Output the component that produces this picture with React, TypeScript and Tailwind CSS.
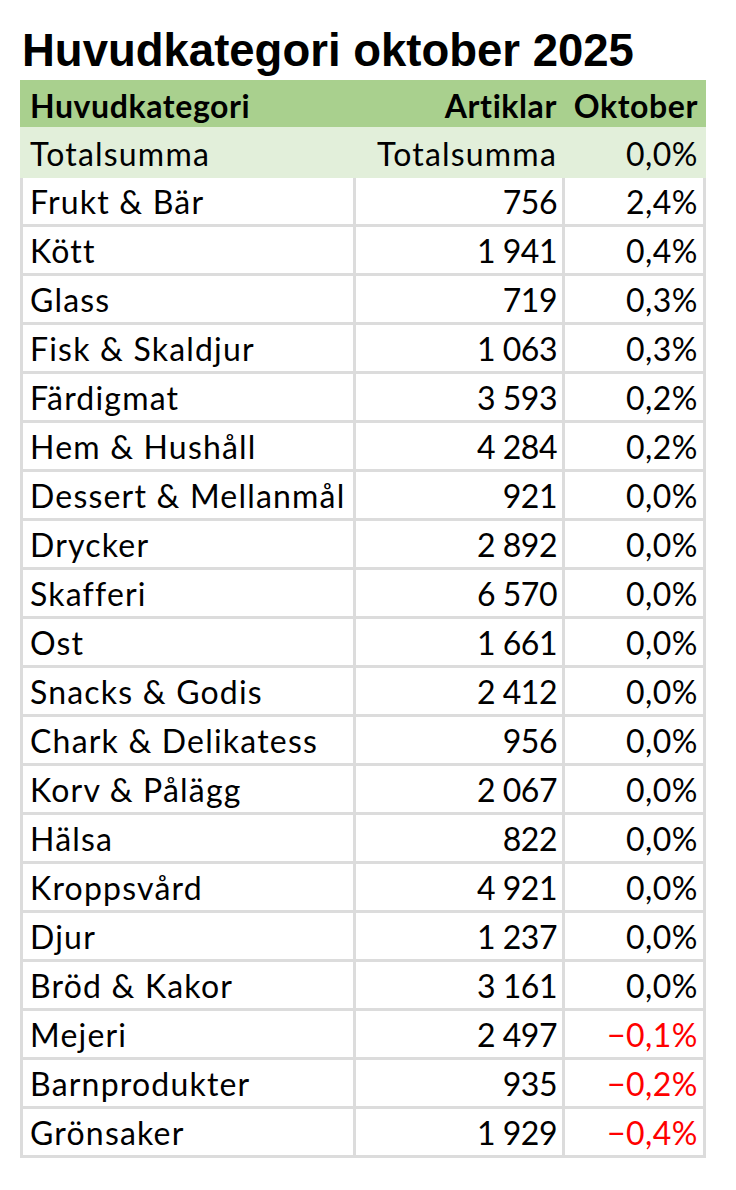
const rows: [string, string, string][] = [
  ["Frukt & Bär", "756", "2,4%"],
  ["Kött", "1\u00a0941", "0,4%"],
  ["Glass", "719", "0,3%"],
  ["Fisk & Skaldjur", "1\u00a0063", "0,3%"],
  ["Färdigmat", "3\u00a0593", "0,2%"],
  ["Hem & Hushåll", "4\u00a0284", "0,2%"],
  ["Dessert & Mellanmål", "921", "0,0%"],
  ["Drycker", "2\u00a0892", "0,0%"],
  ["Skafferi", "6\u00a0570", "0,0%"],
  ["Ost", "1\u00a0661", "0,0%"],
  ["Snacks & Godis", "2\u00a0412", "0,0%"],
  ["Chark & Delikatess", "956", "0,0%"],
  ["Korv & Pålägg", "2\u00a0067", "0,0%"],
  ["Hälsa", "822", "0,0%"],
  ["Kroppsvård", "4\u00a0921", "0,0%"],
  ["Djur", "1\u00a0237", "0,0%"],
  ["Bröd & Kakor", "3\u00a0161", "0,0%"],
  ["Mejeri", "2\u00a0497", "\u22120,1%"],
  ["Barnprodukter", "935", "\u22120,2%"],
  ["Grönsaker", "1\u00a0929", "\u22120,4%"],
];

export default function App() {
  return (
    <div className="w-[736px] h-[1190px] bg-white text-black">
      <h1 className="pt-[25px] pl-[22px] text-[45.5px] leading-[52px] font-bold font-['Liberation_Sans',Arial,sans-serif]">
        Huvudkategori oktober 2025
      </h1>
      <div className="ml-[20px] mt-[3px] w-[686px] font-['Lato',sans-serif] text-[32px]">
        <div className="grid grid-cols-[330px_206px_138px] gap-x-[3px] px-[3px] h-[47px] items-center bg-[#a9d08e] font-bold tracking-[0.6px] pt-[2px]">
          <div className="pl-[7px]">Huvudkategori</div>
          <div className="text-right pr-[5px]">Artiklar</div>
          <div className="text-right pr-[5px]">Oktober</div>
        </div>
        <div className="grid grid-cols-[330px_206px_138px] gap-x-[3px] px-[3px] h-[51px] items-center bg-[#e2efda] tracking-[1.2px] pt-[2px]">
          <div className="pl-[7px]">Totalsumma</div>
          <div className="text-right pr-[5px]">Totalsumma</div>
          <div className="text-right pr-[5px] tracking-[0.5px]">0,0%</div>
        </div>
        <div className="grid grid-cols-[330px_206px_138px] gap-[3px] px-[3px] pb-[3px] bg-[#dcdcdc]">
          {rows.map(([name, count, pct]) => (
            <div key={name} className="contents">
              <div className="bg-white h-[46px] flex items-center pl-[7px] pt-[2px] tracking-[1.2px]">{name}</div>
              <div className="bg-white h-[46px] flex items-center justify-end pr-[5px] pt-[2px] tracking-[-0.5px]">{count}</div>
              <div className={"bg-white h-[46px] flex items-center justify-end pr-[5px] pt-[2px] tracking-[0.5px] " + (pct.startsWith("\u2212") ? "text-[#ff0000]" : "")}>
                {pct}
              </div>
            </div>
          ))}
        </div>
      </div>
    </div>
  );
}
